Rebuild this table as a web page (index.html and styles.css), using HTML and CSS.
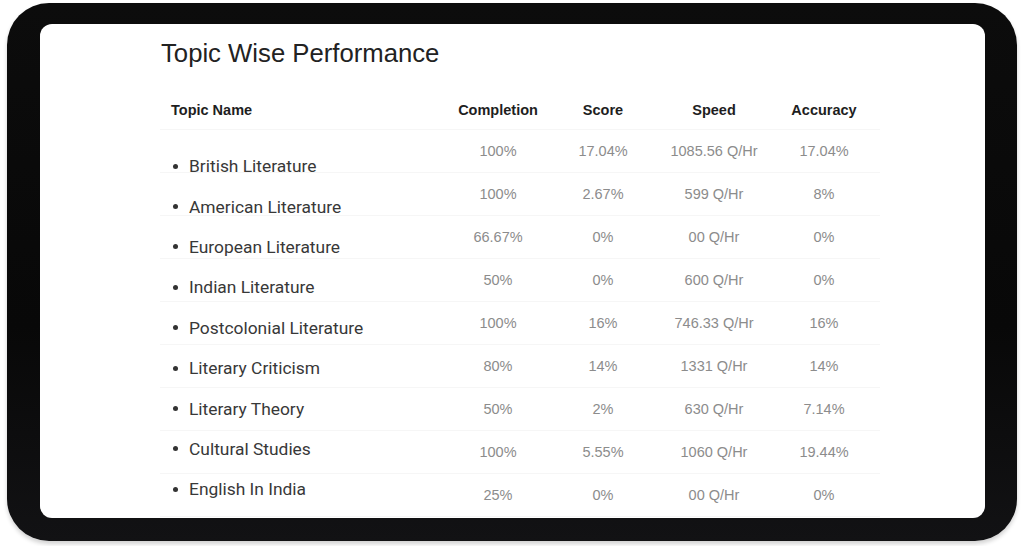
FILE: index.html
```html
<!DOCTYPE html>
<html>
<head>
<meta charset="utf-8">
<link rel="stylesheet" href="styles.css">
</head>
<body>
<div class="device">
  <div class="screen">
    <h1 class="title">Topic Wise Performance</h1>
    <div class="table">
      <div class="row head">
        <div class="cell name-cell">Topic Name</div>
        <div class="cell c1">Completion</div>
        <div class="cell c2">Score</div>
        <div class="cell c3">Speed</div>
        <div class="cell c4">Accuracy</div>
      </div>
      <div class="body">
        <div class="rows">
          <div class="row"><div class="cell name-cell"></div><div class="cell c1">100%</div><div class="cell c2">17.04%</div><div class="cell c3">1085.56 Q/Hr</div><div class="cell c4">17.04%</div></div>
          <div class="row"><div class="cell name-cell"></div><div class="cell c1">100%</div><div class="cell c2">2.67%</div><div class="cell c3">599 Q/Hr</div><div class="cell c4">8%</div></div>
          <div class="row"><div class="cell name-cell"></div><div class="cell c1">66.67%</div><div class="cell c2">0%</div><div class="cell c3">00 Q/Hr</div><div class="cell c4">0%</div></div>
          <div class="row"><div class="cell name-cell"></div><div class="cell c1">50%</div><div class="cell c2">0%</div><div class="cell c3">600 Q/Hr</div><div class="cell c4">0%</div></div>
          <div class="row"><div class="cell name-cell"></div><div class="cell c1">100%</div><div class="cell c2">16%</div><div class="cell c3">746.33 Q/Hr</div><div class="cell c4">16%</div></div>
          <div class="row"><div class="cell name-cell"></div><div class="cell c1">80%</div><div class="cell c2">14%</div><div class="cell c3">1331 Q/Hr</div><div class="cell c4">14%</div></div>
          <div class="row"><div class="cell name-cell"></div><div class="cell c1">50%</div><div class="cell c2">2%</div><div class="cell c3">630 Q/Hr</div><div class="cell c4">7.14%</div></div>
          <div class="row"><div class="cell name-cell"></div><div class="cell c1">100%</div><div class="cell c2">5.55%</div><div class="cell c3">1060 Q/Hr</div><div class="cell c4">19.44%</div></div>
          <div class="row"><div class="cell name-cell"></div><div class="cell c1">25%</div><div class="cell c2">0%</div><div class="cell c3">00 Q/Hr</div><div class="cell c4">0%</div></div>
        </div>
        <ul class="names">
          <li>British Literature</li>
          <li>American Literature</li>
          <li>European Literature</li>
          <li>Indian Literature</li>
          <li>Postcolonial Literature</li>
          <li>Literary Criticism</li>
          <li>Literary Theory</li>
          <li>Cultural Studies</li>
          <li>English In India</li>
        </ul>
      </div>
    </div>
  </div>
</div>
</body>
</html>
```

FILE: styles.css
```css
html, body {
  margin: 0;
  padding: 0;
  background: #ffffff;
}
body {
  width: 1024px;
  height: 546px;
  overflow: hidden;
}
.device {
  margin: 3px 7px 0 7px;
  height: 538px;
  box-sizing: border-box;
  padding: 21px 32px 23px 33px;
  background: linear-gradient(180deg, #0c0c0c 0%, #080808 60%, #121214 100%);
  border-radius: 42px;
  box-shadow: 0 3px 4px rgba(0,0,0,0.18);
}
.screen {
  height: 100%;
  background: #ffffff;
  border-radius: 12px;
  overflow: hidden;
  padding-left: 120px;
  box-sizing: border-box;
}
.title {
  margin: 0;
  padding-top: 15px;
  font-family: "Liberation Sans", Arial, sans-serif;
  font-weight: 400;
  font-size: 25.7px;
  line-height: 28px;
  color: #222;
  padding-left: 1px;
}
.table {
  width: 720px;
  margin-top: 23px;
  font-family: "Liberation Sans", Arial, sans-serif;
}
.row {
  display: flex;
  height: 43px;
  align-items: center;
  border-bottom: 1px solid #f6f6f6;
  box-sizing: border-box;
}
.row.head {
  height: 40px;
  font-weight: 700;
  font-size: 14.5px;
  color: #1e1e1e;
}
.cell {
  text-align: center;
}
.name-cell {
  width: 283px;
  text-align: left;
  padding-left: 11px;
  box-sizing: border-box;
}
.c1 { width: 110px; }
.c2 { width: 100px; }
.c3 { width: 122px; }
.c4 { width: 98px; }
.rows .row {
  font-size: 14.5px;
  color: #8c8c8c;
}
.body {
  display: grid;
}
.rows, .names {
  grid-area: 1 / 1;
}
.names {
  list-style: none;
  margin: 16px 0 0 0;
  padding: 0 0 0 13px;
  font-family: Roboto, "Noto Sans", sans-serif;
  font-size: 17.4px;
  color: #383838;
  align-self: start;
}
.names li {
  height: 40.4px;
  display: flex;
  align-items: center;
}
.names li::before {
  content: "";
  width: 5px;
  height: 5px;
  border-radius: 50%;
  background: #333;
  margin-right: 11px;
}
```
